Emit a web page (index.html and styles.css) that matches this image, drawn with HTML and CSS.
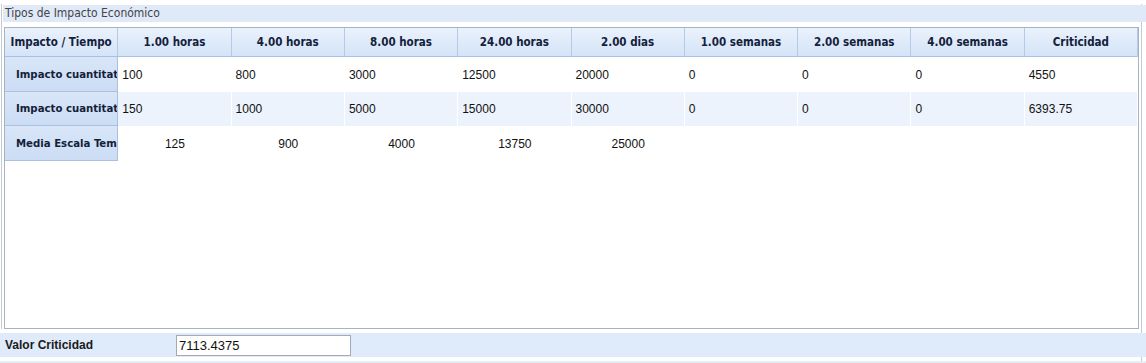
FILE: index.html
```html
<!DOCTYPE html>
<html lang="es">
<head>
<meta charset="utf-8">
<title>Tipos de Impacto Económico</title>
<link rel="stylesheet" href="styles.css">
</head>
<body>
<div class="page">
  <div class="panel">
    <div class="title">Tipos de Impacto Económico</div>
    <div class="grid">
      <div class="row head">
        <div class="hc">Impacto / Tiempo</div>
        <div class="hc">1.00 horas</div>
        <div class="hc">4.00 horas</div>
        <div class="hc">8.00 horas</div>
        <div class="hc">24.00 horas</div>
        <div class="hc">2.00 dias</div>
        <div class="hc">1.00 semanas</div>
        <div class="hc">2.00 semanas</div>
        <div class="hc">4.00 semanas</div>
        <div class="hc">Criticidad</div>
      </div>
      <div class="row r1">
        <div class="rh">Impacto cuantitat</div>
        <div class="dc">100</div>
        <div class="dc">800</div>
        <div class="dc">3000</div>
        <div class="dc">12500</div>
        <div class="dc">20000</div>
        <div class="dc">0</div>
        <div class="dc">0</div>
        <div class="dc">0</div>
        <div class="dc">4550</div>
      </div>
      <div class="row r2">
        <div class="rh">Impacto cuantitat</div>
        <div class="dc">150</div>
        <div class="dc">1000</div>
        <div class="dc">5000</div>
        <div class="dc">15000</div>
        <div class="dc">30000</div>
        <div class="dc">0</div>
        <div class="dc">0</div>
        <div class="dc">0</div>
        <div class="dc">6393.75</div>
      </div>
      <div class="row r3">
        <div class="rh">Media Escala Tem</div>
        <div class="mc">125</div>
        <div class="mc">900</div>
        <div class="mc">4000</div>
        <div class="mc">13750</div>
        <div class="mc">25000</div>
        <div class="mc"></div>
        <div class="mc"></div>
        <div class="mc"></div>
        <div class="mc"></div>
      </div>
    </div>
  </div>
  <div class="bottom">
    <span class="label">Valor Criticidad</span>
    <input class="value" type="text" value="7113.4375">
  </div>
  <div class="strip"></div>
</div>
</body>
</html>
```

FILE: styles.css
```css
html, body {
  margin: 0;
  padding: 0;
  background: #ffffff;
}

.page {
  width: 1142px;
  height: 363px;
  box-sizing: border-box;
  border-right: 1px solid #c3cad4;
  overflow: visible;
}

.panel {
  margin-top: 4px;
  margin-left: 1px;
  padding-top: 1px;
  border-left: 1px solid #c3cad4;
}

.title {
  height: 17px;
  margin-left: 1px;
  margin-right: -6px;
  padding-left: 2px;
  background: #dfe9f8;
  font-family: "DejaVu Sans Condensed", "DejaVu Sans", sans-serif;
  font-stretch: condensed;
  font-size: 12px;
  line-height: 17px;
  color: #444444;
}

.grid {
  margin-top: 5px;
  margin-left: 2px;
  width: 1135px;
  height: 302px;
  box-sizing: border-box;
  border: 1px solid #a7b3c1;
  background: #ffffff;
}

.row {
  display: grid;
  grid-template-columns: repeat(10, 1fr);
}

.head {
  height: 29px;
}

.hc {
  display: flex;
  align-items: center;
  justify-content: center;
  background: linear-gradient(#eaf2fc, #d4e4f8);
  border-right: 1px solid #b4cae6;
  border-bottom: 1px solid #a9c1e0;
  font-family: "DejaVu Sans Condensed", "DejaVu Sans", sans-serif;
  font-stretch: condensed;
  font-weight: bold;
  font-size: 11.5px;
  color: #14213a;
  white-space: nowrap;
}

.r1, .r3 {
  height: 35px;
}

.r2 {
  height: 34px;
  background: #edf3fc;
}

.rh {
  display: flex;
  align-items: center;
  padding-left: 11px;
  overflow: hidden;
  white-space: nowrap;
  background: linear-gradient(#d9e6f8, #cbdcf4);
  border-right: 1px solid #aac0dd;
  border-bottom: 1px solid #aac0dd;
  font-family: "DejaVu Sans Condensed", "DejaVu Sans", sans-serif;
  font-stretch: condensed;
  font-weight: bold;
  font-size: 11.3px;
  color: #14213a;
}

.dc {
  display: flex;
  align-items: center;
  padding-left: 4px;
  border-right: 1px solid #ffffff;
  font-family: "Liberation Sans", Arial, sans-serif;
  font-size: 12px;
  color: #111111;
}

.mc {
  display: flex;
  align-items: center;
  justify-content: center;
  font-family: "Liberation Sans", Arial, sans-serif;
  font-size: 12px;
  color: #111111;
}

.bottom {
  display: flex;
  align-items: center;
  height: 24px;
  margin-top: 4px;
  margin-right: -5px;
  background: #dfeafa;
}

.label {
  width: 176px;
  padding-left: 5px;
  box-sizing: border-box;
  font-family: "Liberation Sans", Arial, sans-serif;
  font-weight: bold;
  font-size: 12px;
  color: #1a1a1a;
}

.value {
  width: 175px;
  height: 21px;
  box-sizing: border-box;
  margin: 0;
  padding: 0 2px;
  border: 1px solid #a3aab3;
  background: #ffffff;
  font-family: "Liberation Sans", Arial, sans-serif;
  font-size: 13px;
  color: #111111;
  outline: none;
}

.strip {
  height: 2px;
  margin-top: 4px;
  margin-right: -5px;
  background: #e6eefa;
}
```
